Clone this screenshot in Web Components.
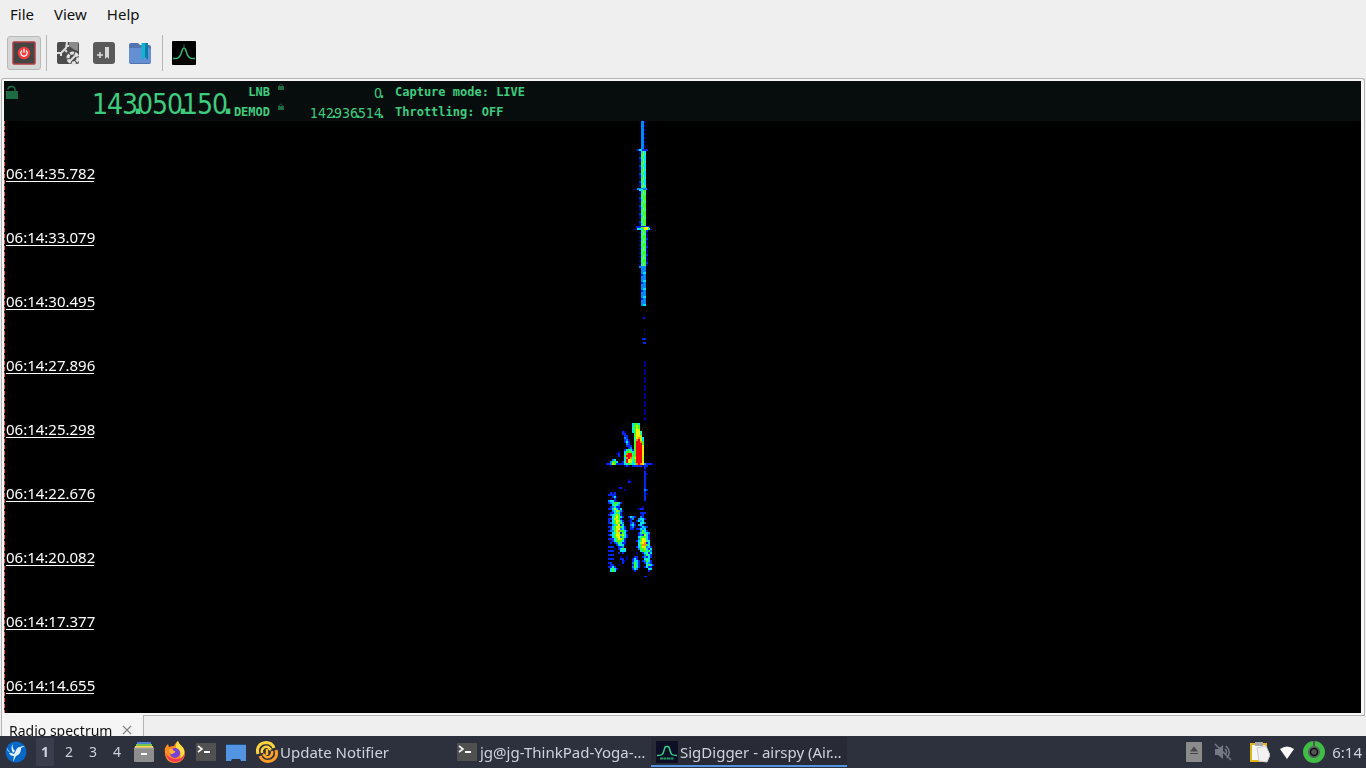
<!DOCTYPE html>
<html lang="en">
<head>
<meta charset="utf-8">
<meta name="viewport" content="width=device-width, initial-scale=1">
<title>SigDigger - airspy</title>
<style>
  body {
    margin: 0;
    background: #efefef;
    color: #111;
    font: 14px/20px "Noto Sans", sans-serif;
  }
</style>
</head>
<body>
<desktop-screen></desktop-screen>

<script>
const ICONS = {
  power: `<svg viewBox="0 0 24 24"><rect x="1" y="1" width="22" height="22" rx="1" fill="#454545" stroke="#b43c3c" stroke-width="1.5"/><circle cx="12" cy="12" r="6.2" fill="#f33c3c"/><path d="M10 9.4a3.2 3.2 0 1 0 4 0M12 7.8v4" fill="none" stroke="#fff" stroke-width="1.3"/></svg>`,
  gears: `<svg viewBox="0 0 24 24"><rect x="1" y="1" width="22" height="22" rx="2" fill="#4c4c4c"/><path d="M13 1h9v9l-3-1-6-4z" fill="#8c8c8c"/><path d="M1 12h4l5-5 1-6" fill="none" stroke="#ddd" stroke-width="2"/><path d="M5 12v3M9 9l2 2M10 5h3" stroke="#ddd" stroke-width="2"/><circle cx="17" cy="17" r="5" fill="none" stroke="#e2e2e2" stroke-width="3" stroke-dasharray="4 1"/><path d="M13 21l8-8" stroke="#e2e2e2" stroke-width="2"/></svg>`,
  addmark: `<svg viewBox="0 0 24 24"><rect x="1" y="1" width="22" height="22" rx="3" fill="#5a5a5a"/><path d="M13 6h4v12l-2-2-2 2z" fill="#d8d8d8"/><path d="M5 14h6M8 11v6" stroke="#ddd" stroke-width="1.500"/></svg>`,
  bookmark: `<svg viewBox="0 0 24 24"><path d="M1 4q0-2 2-2h7l2 2h9q2 0 2 2v15q0 2-2 2H3q-2 0-2-2z" fill="#5275b2"/><path d="M1 7h20q2 0 2 2v11q0 2-2 2H3q-2 0-2-2z" fill="#648fd3"/><path d="M13.500 2H20v17l-3.200-3-3.300 3z" fill="#10b3d6"/><path d="M17 2h3v17l-3-3z" fill="#087da8"/></svg>`,
  peak: `<svg viewBox="0 0 24 24"><rect width="24" height="24" rx="1" fill="#000"/><path d="M1 17.500c5 .5 7-1 8.500-6 1-4 1.500-4.500 2.500-4.500s1.500.5 2.500 4.500c1.500 5 3.500 6.500 8.500 6" fill="none" stroke="#32b877" stroke-width="1.500"/><path d="M12 3v4" stroke="#185c3c"/></svg>`,
  unlock: `<svg viewBox="0 0 12 14"><path d="M2 4.500C2 1 8.500 0 9 4.500V7" fill="none" stroke="#1d6b42" stroke-width="1.500"/><rect x="0" y="6" width="12" height="8" fill="#1d6b42"/></svg>`,
  lock: `<svg viewBox="0 0 6 7"><path d="M1.500 3V2q1.500-2 3 0v1" fill="none" stroke="#174a30"/><rect y="3" width="6" height="4" fill="#1d6b42"/></svg>`,
  bird: `<svg viewBox="0 0 22 22"><circle cx="11" cy="11" r="10.500" fill="#0868c9"/><path d="M2 7c2 4 4 5 7 6 2-2 2-7 6-7 2-1 3-1 5-1l-4 2c0 5-2 7-5 8l-3 6 1-6c-3 0-4-1-5-3l2 0C3 11 2 9 2 7zm6-4c-1 3 0 5 2 7L8 12C6 8 6 6 8 3z" fill="#e4f2ff"/></svg>`,
  files: `<svg viewBox="0 0 22 22"><path d="M4 1h14v5H4z" fill="#4b83d5"/><path d="M3 3h16v5H3z" fill="#74c246"/><path d="M2 5h18v5H2z" fill="#ffd34f"/><rect x="1" y="7" width="20" height="14" rx="1" fill="#8e8e8e"/><path d="M1 7h20" stroke="#aaa"/><path d="M8 13h6" stroke="#fff" stroke-width="2"/></svg>`,
  firefox: `<svg viewBox="0 0 22 22"><path d="M1 12C0 7 2 5 4 3l1 3c2-1 4-1 5-1 1-2 2-4 4-5 1 4 4 4 6 8 3 8-2 14-9 14C5 22 1 18 1 12z" fill="#ff8b22"/><path d="M2 13c1 5 5 8 9 8 6 0 10-4 10-10-1 4-4 7-8 7-6 0-9-3-11-5z" fill="#f43a58"/><path d="M14 0c1 4 5 5 6 9 1 4-1 7-4 8 2-5 0-8-3-9-2-2-1-6 1-8z" fill="#ffe044"/><circle cx="11" cy="12" r="5" fill="#7541d8"/><path d="M5 9c2-2 4-1 5 1 2 0 2 1 0 2-2 1-2 2-4 0z" fill="#ffb13c"/></svg>`,
  terminal: `<svg viewBox="0 0 22 22"><rect x="1" y="2" width="20" height="18" rx="1" fill="#505050"/><path d="M3 5l4 3-4 3" fill="none" stroke="#f4f4f4" stroke-width="1.600"/><path d="M9 11h6" stroke="#fff" stroke-width="2"/></svg>`,
  desktop: `<svg viewBox="0 0 22 22"><rect x="0" y="3" width="20" height="1" fill="#234d78"/><path d="M0 4h20v16h-5l-1-2H6l-1 2H0z" fill="#5294e2"/></svg>`,
  update: `<svg viewBox="0 0 22 22" fill="none"><path d="M2 13C0 6 4 2 10 1.500q6 0 8 5.500" stroke="#ffd43d" stroke-width="3"/><path d="M20 9c2 7-2 11-8 11.500q-6 0-8-5.500" stroke="#ff9c24" stroke-width="3"/><path d="M6 12c-1-4 2-7 6-6l3 3" stroke="#ffd03a" stroke-width="2.500"/><path d="M16 10c1 4-2 7-6 6l-3-3" stroke="#ffa52a" stroke-width="2.500"/><path d="M11 8v6" stroke="#ffb52c" stroke-width="2.500"/></svg>`,
  sig: `<svg viewBox="0 0 22 22"><rect width="22" height="22" fill="#0c0f26"/><path d="M1 14.500c5 0 6-1 7-5 1-4 1-4 3-4s2 0 3 4c1 4 2 5 7 5" fill="none" stroke="#35d58a" stroke-width="1.400"/><path d="M4 17.500h14" stroke="#239c63" stroke-width="2" stroke-dasharray="3 .5"/></svg>`,
  eject: `<svg viewBox="0 0 16 20"><rect width="16" height="20" rx="1" fill="#8b8b8b"/><path d="M8 4.500l4 5H4zM4 11h8v1H4z" fill="#474747"/></svg>`,
  mute: `<svg viewBox="0 0 18 18" fill="none"><path d="M1 6h3l5-4v14l-5-4H1z" fill="#757984"/><path d="M11 6q3 3 0 6M12 3q6 6 1 12M1 1l16 16" stroke="#757984" stroke-width="1.500"/></svg>`,
  clipboard: `<svg viewBox="0 0 20 22"><rect x="1" y="3" width="15" height="17" fill="#f7f7f7" stroke="#e2b61b" stroke-width="2"/><path d="M5 1h8v4H5z" fill="#aaa"/><path d="M7 7l9-2 4 9-3 7-8-1z" fill="#f2f2f2" stroke="#ccc"/></svg>`,
  wifi: `<svg viewBox="0 0 16 14"><path d="M1 4q7-5 14 0L8 14z" fill="#fff"/></svg>`,
  disc: `<svg viewBox="0 0 22 22"><circle cx="11" cy="11" r="8.500" fill="#555c5f" stroke="#3fbd45" stroke-width="5"/><path d="M11 0v5" stroke="#555" stroke-width="2"/><circle cx="11" cy="11" r="3.500" fill="#555" stroke="#111" stroke-width="1.500"/></svg>`,
  close: `<svg viewBox="0 0 10 10"><path d="M1 1l8 8M9 1L1 9" stroke="#888" stroke-width="1.200"/></svg>`
};

class AppIcon extends HTMLElement {
  constructor() {
    super();
    this.attachShadow({ mode: 'open' });
  }

  connectedCallback() {
    this.shadowRoot.innerHTML = `
    <style>
      :host { display: block; flex: none; width: var(--icon-width, 22px); height: var(--icon-height, 22px); }
      svg { display: block; width: 100%; height: 100%; }
    </style>
    ${ICONS[this.getAttribute('name')]}`;
  }
}

class MenuBar extends HTMLElement {
  constructor() {
    super();
    this.attachShadow({ mode: 'open' });
    this.shadowRoot.innerHTML = `
    <style>
      :host { display: block; font-size: 15px; }
      nav { display: flex; height: 28px; padding-bottom: 2px; }
      button { border: 0; padding: 0 10px; background: none; color: inherit; font: inherit; }
    </style>
    <nav><button>File</button><button>View</button><button>Help</button></nav>`;
  }
}

class ToolBar extends HTMLElement {
  constructor() {
    super();
    this.attachShadow({ mode: 'open' });
    this.shadowRoot.innerHTML = `
    <style>
      :host {
        display: flex; align-items: center; gap: 2px; height: 46px; padding: 0 7px;
        --icon-width: 24px; --icon-height: 24px;
      }
      button {
        display: grid; place-items: center; box-sizing: border-box;
        width: 34px; height: 34px; padding: 0;
        border: 1px solid transparent; border-radius: 3px; background: none;
      }
      button[aria-pressed=true] { background: #d6d8d8; border-color: #b8baba; }
      hr { width: 1px; height: 36px; margin: 0 2px 0 3px; border: 0; background: #b5b7b7; }
    </style>
    <button aria-pressed="true" aria-label="Capture"><app-icon name="power"></app-icon></button>
    <hr>
    <button aria-label="Setup"><app-icon name="gears"></app-icon></button>
    <button aria-label="Add bookmark"><app-icon name="addmark"></app-icon></button>
    <button aria-label="Bookmarks"><app-icon name="bookmark"></app-icon></button>
    <hr>
    <button aria-label="Spectrum"><app-icon name="peak"></app-icon></button>`;
  }
}

// One cell per digit, the group dot straddles the cell's right edge
class LcdNumber extends HTMLElement {
  constructor() {
    super();
    this.attachShadow({ mode: 'open' });
  }

  connectedCallback() {
    const digits = this.getAttribute('value').match(/\d\.?/g);
    this.shadowRoot.innerHTML = `
    <style>
      :host { display: flex; justify-content: flex-end; font-family: "Liberation Sans Narrow", "DejaVu Sans Condensed", sans-serif; }
      span { display: flex; width: var(--lcd-pitch); justify-content: flex-end; }
      i { display: flex; justify-content: center; width: 0; font-style: normal; font-weight: bold; }
    </style>
    ${digits.map(d => `<span>${d[0]}${d[1] ? '<i>.</i>' : ''}</span>`).join('')}`;
  }
}

class TunerReadout extends HTMLElement {
  constructor() {
    super();
    this.attachShadow({ mode: 'open' });
    this.shadowRoot.innerHTML = `
    <style>
      :host {
        display: grid;
        grid-template: 20px 20px / 14px 208px 42px 16px 96px 1fr;
        align-items: center;
        padding-left: 2px;
        background: #070d0d;
        color: #3dcc7e;
        font: bold 12px/20px "DejaVu Sans Mono", monospace;
      }
      .open { align-self: start; padding-top: 4px; grid-row: 1 / 3; --icon-width: 12px; --icon-height: 14px; }
      .main { grid-row: 1 / 3; grid-column: 2; font-size: 28px; line-height: 40px; font-weight: normal; --lcd-pitch: 15px; padding-top: 8px; }
      .sub { font-size: 14px; font-weight: normal; --lcd-pitch: 8px; padding-top: 4px; }
      .label { text-align: right; padding-top: 2px; }
      .lock { align-self: start; padding: 2px 0 0 8px; --icon-width: 6px; --icon-height: 7px; }
      .mode { padding: 2px 0 0 13px; }
    </style>
    <div class="open"><app-icon name="unlock"></app-icon></div>
    <lcd-number class="main" value="143.050.150."></lcd-number>
    <div class="label">LNB</div>
    <div class="lock"><app-icon name="lock"></app-icon></div>
    <lcd-number class="sub" value="0."></lcd-number>
    <div class="mode">Capture mode: LIVE</div>
    <div class="label">DEMOD</div>
    <div class="lock"><app-icon name="lock"></app-icon></div>
    <lcd-number class="sub" value="142.936.514."></lcd-number>
    <div class="mode">Throttling: OFF</div>`;
  }
}

const HEAT = {
  n: '#000088', b: '#0028f0', c: '#0088ff', C: '#00e4ff', g: '#20ffa0',
  G: '#40ff20', y: '#b0ff00', Y: '#ffee00', o: '#ff9000', r: '#ff0000'
};

// Rows of 2px cells, x counted from the carrier
const BURSTS = [
  { x: -37, y: 302, rows: [
    '.............CGGC',
    '.............CGyG',
    '.............gGyG',
    '.............CGYy',
    '........bn...CGYYg',
    '........bb....GYYg',
    '.........bb...GYYy',
    '.........cb...gYoyC',
    '.........bcn..goryC',
    '.........bCb..GrroG',
    '..........cb..GrrrG',
    '..........bbb.GrrrY',
    '...........bc.GrrrY',
    '.........bCGCbGrrrY',
    '......n..CGGGCGrrrY',
    '.....nb..CorrgGrrrY',
    '......b..GrrrGGrrry',
    '.........Corogyrrry',
    '...cC....CrYygGrrry',
    '..cGGC..bgrYyCGrrrY',
    'bbcyGbbbbCgGgCgoroYcbbbn',
    '..n......nbn.bbbbbnbb',
    '...................b',
    '...................n',
    '...................b',
    '...................bn',
    '...................b',
    '...................b',
    '...........n.......b',
    '...........bn......b',
    '...................b',
    '...................b',
    '......nb...........b',
    '.........n.........cb',
    '...................b',
    '...................bn',
    '...................b',
    '...................b',
    '...................b'
  ] },
  { x: -35, y: 371, rows: [
    '.bnb', 'bbbb', '..bCn', '.n.b', 'cCCbn',
    'bcCGGCb', '..CGCc', '.bcCbb...........n', 'bbCyCbC........nbb', '..cCyGcn',
    '.bbCGCb.........bbb', 'bcCgyGb.........nb', '..CGYGCb..bCcb..cb', 'bbCyyGb....bc..cCCb', 'b.CGYyCb..nb..bCcC',
    'bcCGYGgc...bcn..Cgc', '..cCGYbC...cCb.cCb', 'bbCGYyGCb..bcn..bCcb', '.bCGyYcCb..bb.bbCcC', 'bccGYoGGCb......cGCb',
    '..CgyybGC......bCGgCc', 'bcCGYYGyCb.....bcbyCb', '..CGyYcGCb.....CgGGCb', 'bbbCGYyGb......cGYyCb', '.nbCGGGCb.....bCGYYgC',
    '.b.bcGCbb......CyYobC', '....bCgCn......CGooGC', 'bbb..bbc......bCGYycCb', '...n.bCGC......cGGyCbC', 'bbb...CCC.......CGGCGc',
    '.....b.b......n..bCgbC', 'bbb...............cGCb', '......n..n...bb..bcbCb', 'bbb...bb.n..bCb...CgC', '.......bn...bCCb.bcGCb',
    'bb.....b....cGCb..bCcb', '.bb..n......bGCb...CGCb', 'bbCb........cGCb..bCbb', '.CGCb.......bCc.....CC', '.CGC.........b......b'
  ] }
];

class WaterfallView extends HTMLElement {
  constructor() {
    super();
    this.attachShadow({ mode: 'open' });
    const times = ['35.782', '33.079', '30.495', '27.896', '25.298', '22.676', '20.082', '17.377', '14.655'];
    this.shadowRoot.innerHTML = `
    <style>
      :host { display: grid; min-height: 0; overflow: hidden; background: #000; }
      canvas, ol { grid-area: 1 / 1; min-width: 0; min-height: 0; }
      canvas { width: 100%; height: 100%; display: block; contain: size; }
      ol {
        margin: 0; padding: 0 0 0 1px; list-style: none; color: #fff;
        border-left: 1px solid;
        border-image: repeating-linear-gradient(#ff5a5a 0 4px, #16282c 4px 6px) 1;
        font: 15px/16px "Noto Sans", sans-serif;
      }
      li { display: flex; align-items: flex-end; height: 64px; box-sizing: border-box; padding-bottom: 3px; }
      time { width: 88px; border-bottom: 1px solid #fff; }
    </style>
    <canvas></canvas>
    <ol>${times.map(t => `<li><time>06:14:${t}</time></li>`).join('')}</ol>`;
  }

  connectedCallback() {
    this.draw();
    new ResizeObserver(() => this.draw()).observe(this);
  }

  draw() {
    const $canvas = this.shadowRoot.querySelector('canvas');
    $canvas.width = this.clientWidth;
    $canvas.height = this.clientHeight;
    const ctx = $canvas.getContext('2d');
    const carrier = Math.round($canvas.width * 0.47) + 1;

    const rect = (color, x, y, w, h) => {
      ctx.fillStyle = HEAT[color] || color;
      ctx.fillRect(carrier + x, y, w, h);
    };

    // Line with its level changing every 2px
    const line = (colors, x, from, to, w) => {
      for (let y = from, i = 0; y < to; y += 2, i++) {
        const c = colors[(i * 5 + (i >> 2)) % colors.length];
        if (c !== '.') rect(c, x, y, w, 2);
      }
    };

    line('ccccccb', -2, 0, 28, 3);
    line('n.nnb..', 1, 0, 28, 2);
    line('nbn.bnb', -4, 30, 107, 2);
    line('n..n...', -4, 107, 145, 2);
    line('CgCgggg', -2, 30, 145, 2);
    line('yGyGGyy', 0, 30, 145, 1);
    line('CCCCCgC', 1, 30, 68, 2);
    line('GGGgGGG', 1, 68, 145, 2);
    line('nn.nnbn', 3, 107, 145, 2);
    line('cbccbcb', -2, 147, 184, 2);
    line('cccCccc', 0, 147, 184, 3);

    // Flares where the carrier jumps
    rect('b', -6, 28, 11, 2);
    rect('C', -4, 28, 3, 2);
    rect('n', -10, 68, 16, 1);
    rect('c', -6, 67, 10, 2);
    rect('C', -4, 68, 4, 2);
    rect('b', -7, 105, 14, 2);
    rect('n', -10, 108, 19, 1);
    rect('C', -6, 107, 13, 2);
    rect('G', -2, 106, 8, 2);
    rect('Y', 1, 106, 4, 3);
    rect('c', -4, 145, 7, 2);

    rect('n', -1, 196, 4, 1);
    rect('b', 0, 197, 2, 1);
    line('n.nnn.n', 1, 208, 216, 1);
    rect('b', -1, 217, 4, 2);
    rect('b', 0, 221, 3, 2);
    line('n.nnnnn', 1, 240, 300, 2);

    BURSTS.forEach(burst => {
      burst.rows.forEach((row, j) => {
        [...row].forEach((c, i) => {
          if (c !== '.') rect(c, burst.x + i * 2, burst.y + j * 2, 2, 2);
        });
      });
    });
    rect('b', 1, 455, 3, 1);
  }
}

class SpectrumPane extends HTMLElement {
  constructor() {
    super();
    this.attachShadow({ mode: 'open' });
    this.shadowRoot.innerHTML = `
    <style>
      :host { display: flex; flex-direction: column; flex: 1; min-height: 0; padding: 2px 1px 0; }
      main {
        display: grid; grid-template-rows: auto 1fr; flex: 1; min-height: 0;
        padding: 2px 3px 2px 2px; border: 1px solid #b4b4b4; border-bottom: 0;
        border-radius: 3px 3px 0 0; background: #f7f7f7;
      }
      footer { display: flex; height: 21px; overflow: hidden; }
      .tab {
        display: flex; align-items: flex-start; gap: 10px; padding: 6px 11px 0 7px;
        border: 1px solid #b4b4b4; border-width: 0 1px; background: #f5f5f5;
        --icon-width: 10px; --icon-height: 10px;
      }
      .tab button { border: 0; padding: 4px 0 0; background: none; }
      .rest { flex: 1; border-top: 1px solid #b4b4b4; }
    </style>
    <main><tuner-readout></tuner-readout><waterfall-view></waterfall-view></main>
    <footer>
      <div class="tab"><span>Radio spectrum</span><button aria-label="Close"><app-icon name="close"></app-icon></button></div>
      <div class="rest"></div>
    </footer>`;
  }
}

class TaskButton extends HTMLElement {
  constructor() {
    super();
    this.attachShadow({ mode: 'open' });
  }

  connectedCallback() {
    this.shadowRoot.innerHTML = `
    <style>
      :host { display: block; width: 196px; }
      button {
        display: flex; align-items: center; gap: 2px; width: 100%; height: 30px;
        padding: 2px 5px 0; border: 0; border-bottom: 2px solid transparent;
        background: none; color: inherit; font: inherit;
      }
      :host([active]) button { background: #282b35; border-color: #5294e2; }
      span { white-space: nowrap; }
    </style>
    <button><app-icon name="${this.getAttribute('icon')}"></app-icon><span><slot></slot></span></button>`;
  }
}

class TaskBar extends HTMLElement {
  constructor() {
    super();
    this.attachShadow({ mode: 'open' });
    this.shadowRoot.innerHTML = `
    <style>
      :host {
        display: flex; align-items: center; height: 32px; padding: 0 4px 0 5px;
        background: #2d313d; color: #ced2dc; font-size: 15px;
      }
      button { padding: 0; border: 0; background: none; color: inherit; font: inherit; }
      .spaces { display: flex; gap: 6px; padding: 0 7px 0 9px; }
      .spaces button { width: 18px; height: 28px; font-size: 14px; }
      .spaces .current { background: #393d4c; font-weight: bold; }
      .launch { display: flex; gap: 9px; }
      .tasks { display: flex; gap: 4px; padding-left: 3px; }
      .tray { display: flex; align-items: center; margin-left: auto; }
      .eject { --icon-width: 16px; --icon-height: 20px; margin-right: 12px; }
      .mute { --icon-width: 18px; --icon-height: 18px; margin-right: 18px; }
      .clip { --icon-width: 20px; --icon-height: 22px; margin-right: 9px; }
      .wifi { --icon-width: 16px; --icon-height: 14px; margin-right: 8px; }
      .disc { margin-right: 7px; }
    </style>
    <button aria-label="Menu"><app-icon name="bird"></app-icon></button>
    <div class="spaces">
      <button class="current">1</button><button>2</button><button>3</button><button>4</button>
    </div>
    <div class="launch">
      <button aria-label="Files"><app-icon name="files"></app-icon></button>
      <button aria-label="Firefox"><app-icon name="firefox"></app-icon></button>
      <button aria-label="Terminal"><app-icon name="terminal"></app-icon></button>
      <button aria-label="Show desktop"><app-icon name="desktop"></app-icon></button>
    </div>
    <div class="tasks">
      <task-button icon="update">Update Notifier</task-button>
      <task-button icon="terminal">jg@jg-ThinkPad-Yoga-…</task-button>
      <task-button icon="sig" active>SigDigger - airspy (Air…</task-button>
    </div>
    <div class="tray">
      <app-icon class="eject" name="eject"></app-icon>
      <app-icon class="mute" name="mute"></app-icon>
      <app-icon class="clip" name="clipboard"></app-icon>
      <app-icon class="wifi" name="wifi"></app-icon>
      <app-icon class="disc" name="disc"></app-icon>
      <time>6:14</time>
    </div>`;
  }
}

class DesktopScreen extends HTMLElement {
  constructor() {
    super();
    this.attachShadow({ mode: 'open' });
    this.shadowRoot.innerHTML = `
    <style>
      :host { display: flex; flex-direction: column; height: 100vh; overflow: hidden; }
    </style>
    <menu-bar></menu-bar>
    <tool-bar></tool-bar>
    <spectrum-pane></spectrum-pane>
    <task-bar></task-bar>`;
  }
}

customElements.define('app-icon', AppIcon);
customElements.define('menu-bar', MenuBar);
customElements.define('tool-bar', ToolBar);
customElements.define('lcd-number', LcdNumber);
customElements.define('tuner-readout', TunerReadout);
customElements.define('waterfall-view', WaterfallView);
customElements.define('spectrum-pane', SpectrumPane);
customElements.define('task-button', TaskButton);
customElements.define('task-bar', TaskBar);
customElements.define('desktop-screen', DesktopScreen);
</script>
</body>
</html>
